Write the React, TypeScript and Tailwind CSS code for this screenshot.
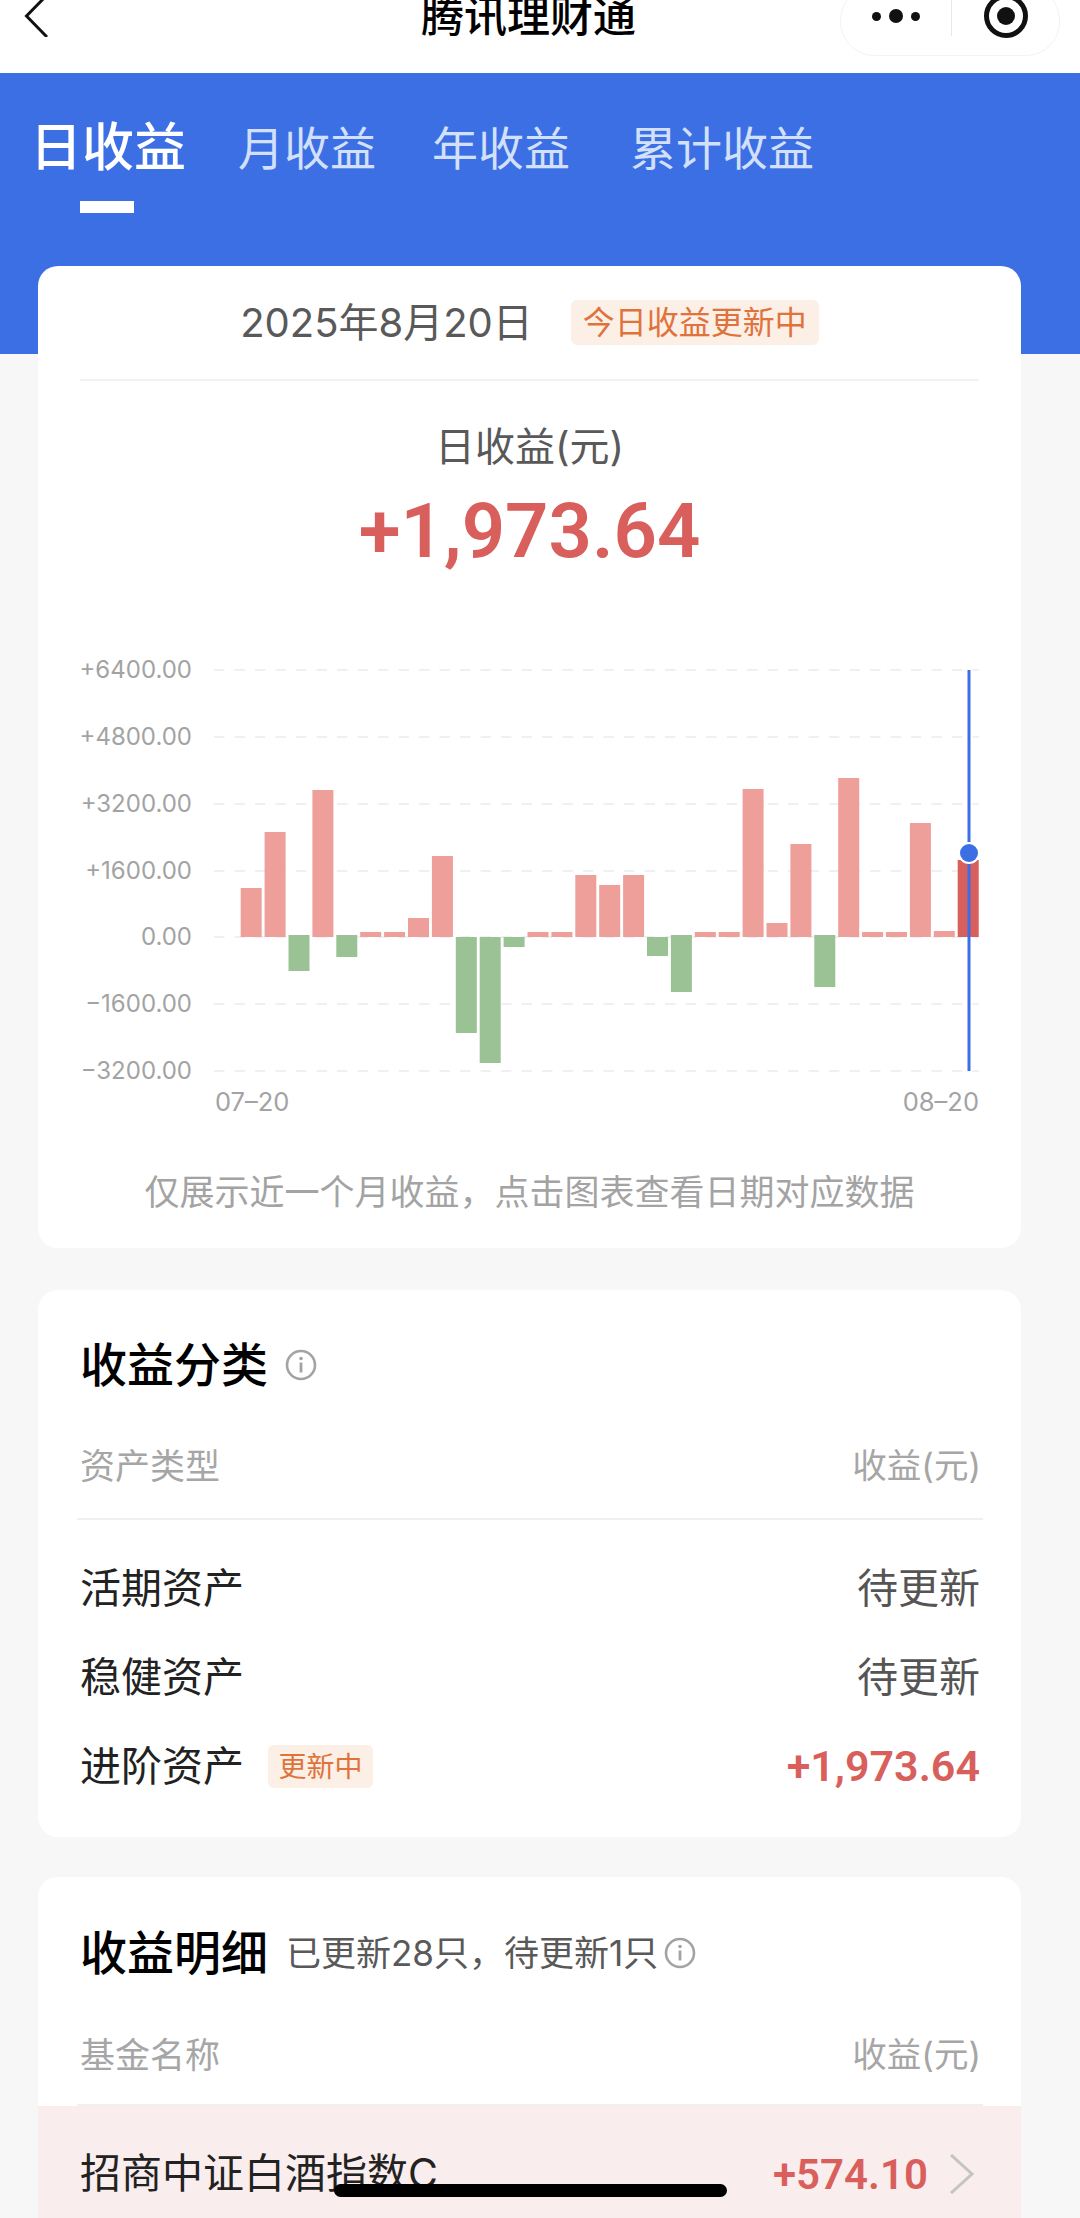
import React from 'react';

const fontStack = { fontFamily: '"Inter", "Noto Sans CJK SC", sans-serif' };
const numberFont = 'font-["Roboto","Noto_Sans_CJK_SC",sans-serif]';

// bar tops/bottoms in page pixels, baseline of the chart is y=937
const bars: { top: number; bottom: number }[] = [
  { top: 888, bottom: 937 },
  { top: 832, bottom: 937 },
  { top: 935, bottom: 971 },
  { top: 790, bottom: 937 },
  { top: 935, bottom: 957 },
  { top: 932, bottom: 937 },
  { top: 932, bottom: 937 },
  { top: 918, bottom: 937 },
  { top: 856, bottom: 937 },
  { top: 937, bottom: 1033 },
  { top: 937, bottom: 1063 },
  { top: 937, bottom: 947 },
  { top: 932, bottom: 937 },
  { top: 932, bottom: 937 },
  { top: 875, bottom: 937 },
  { top: 885, bottom: 937 },
  { top: 875, bottom: 937 },
  { top: 937, bottom: 956 },
  { top: 935, bottom: 992 },
  { top: 932, bottom: 937 },
  { top: 932, bottom: 937 },
  { top: 789, bottom: 937 },
  { top: 923, bottom: 937 },
  { top: 844, bottom: 937 },
  { top: 935, bottom: 987 },
  { top: 778, bottom: 937 },
  { top: 932, bottom: 937 },
  { top: 932, bottom: 937 },
  { top: 823, bottom: 937 },
  { top: 931, bottom: 937 },
  { top: 860, bottom: 937 },
];

const grid = [
  { y: 670, label: '+6400.00' },
  { y: 737, label: '+4800.00' },
  { y: 804, label: '+3200.00' },
  { y: 871, label: '+1600.00' },
  { y: 937, label: '0.00' },
  { y: 1004, label: '−1600.00' },
  { y: 1071, label: '−3200.00' },
];

const Chart: React.FC = () => (
  <svg viewBox="38 650 983 470" className="mt-[74px] block h-[470px] w-[983px]">
    {grid.map((g) => (
      <g key={g.y}>
        <line x1="214" x2="979" y1={g.y} y2={g.y} stroke="#ebebeb" strokeWidth="1.5" strokeDasharray="10.5 10" />
        <text x="192" y={g.y + 8} textAnchor="end" fontSize="24" fill="#a3a3a3" style={fontStack}>
          {g.label}
        </text>
      </g>
    ))}
    {bars.map((b, i) => {
      const x = 240.7 + i * 23.9;
      const last = i === bars.length - 1;
      const color = last ? '#d95f5c' : b.bottom > 937 ? '#9ac295' : '#ee9f9a';
      return <rect key={i} x={x} y={b.top} width="21" height={b.bottom - b.top} fill={color} />;
    })}
    <line x1="969" x2="969" y1="670" y2="1071" stroke="#3c6fe3" strokeWidth="3" />
    <circle cx="969" cy="853" r="11" fill="#ffffff" />
    <circle cx="969" cy="853" r="9" fill="#3c6fe3" />
    <text x="215" y="1111" fontSize="25.5" fill="#a3a3a3" style={fontStack}>07–20</text>
    <text x="979" y="1111" textAnchor="end" fontSize="25.5" fill="#a3a3a3" style={fontStack}>08–20</text>
  </svg>
);

const InfoIcon: React.FC = () => (
  <svg width="32" height="32" viewBox="0 0 32 32" fill="none">
    <circle cx="16" cy="16" r="14" stroke="#a3a3a3" strokeWidth="2.6" />
    <circle cx="16" cy="9.5" r="1.8" fill="#a3a3a3" />
    <rect x="14.6" y="13.5" width="2.8" height="10" fill="#a3a3a3" />
  </svg>
);

const TableHead: React.FC<{ left: string }> = ({ left }) => (
  <div className="flex justify-between pl-[42px] pr-[40px] text-[35px] leading-[50px] text-[#a6a6a6]">
    <span>{left}</span>
    <span className="text-[34.5px]">收益(元)</span>
  </div>
);

const Row: React.FC<{ name: string; children: React.ReactNode; tag?: boolean }> = ({ name, children, tag }) => (
  <div className="flex h-[89px] items-center justify-between pl-[42px] pr-[41px]">
    <div className="flex items-center">
      <span className="text-[41px] text-[#222222]">{name}</span>
      {tag && (
        <span className="ml-[24px] flex h-[43px] w-[105px] items-center justify-center rounded-[6px] bg-[#fbefe6] text-[28px] text-[#e0733c]">
          更新中
        </span>
      )}
    </div>
    {children}
  </div>
);

export default function App() {
  return (
    <div className="relative h-[2218px] w-[1080px] overflow-hidden bg-[#f7f7f7]" style={fontStack}>
      {/* nav bar, cut off by the top of the screen */}
      <div className="h-[73px] overflow-hidden bg-white">
        <div className="-mt-[14px] flex items-start">
          <svg width="24" height="42" viewBox="0 0 24 42" fill="none" className="ml-[24px] mt-[9px]">
            <path d="M23 0 L2.5 21 L23 42" stroke="#111111" strokeWidth="3" />
          </svg>
          <div className="ml-[373px] text-[43px] font-medium leading-[60px] text-black">腾讯理财通</div>
          <div className="ml-[204px] flex h-[70px] w-[220px] items-center rounded-[34px] border border-[#f3f3f3] pb-[10px]">
            <div className="ml-[31px] flex w-[48px] items-center justify-between">
              <span className="h-[9px] w-[9px] rounded-full bg-[#111111]" />
              <span className="h-[14px] w-[14px] rounded-full bg-[#111111]" />
              <span className="h-[9px] w-[9px] rounded-full bg-[#111111]" />
            </div>
            <span className="ml-[31px] h-[40px] w-px bg-[#e8e8e8]" />
            <div className="ml-[32px] flex h-[44px] w-[44px] items-center justify-center rounded-full border-[5px] border-[#111111]">
              <span className="h-[18px] w-[18px] rounded-full bg-[#111111]" />
            </div>
          </div>
        </div>
      </div>

      {/* tabs */}
      <div className="h-[281px] bg-[#3c6fe3] pl-[30px] pt-[40px]">
        <div className="flex items-center text-[46px] leading-[70px] text-[#d3e0fa]">
          <div className="w-[208px] text-[52px] font-medium text-white">日收益</div>
          <div className="w-[194px]">月收益</div>
          <div className="w-[198px]">年收益</div>
          <div>累计收益</div>
        </div>
        <div className="ml-[50px] mt-[18px] h-[12px] w-[54px] bg-white" />
      </div>

      <div className="-mt-[88px] pl-[38px] pr-[59px]">
        {/* daily earnings */}
        <section className="rounded-[20px] bg-white">
          <div className="flex h-[113px] items-center justify-center gap-[38px]">
            <span className="text-[40px] text-[#595959]">2025年8月20日</span>
            <span className="flex h-[45px] w-[248px] items-center justify-center rounded-[6px] bg-[#fbefe6] text-[32px] text-[#e0733c]">
              今日收益更新中
            </span>
          </div>
          <div className="mx-[42px] h-[2px] bg-[#f2f2f2]" />
          <div className="mt-[41px] text-center text-[40px] leading-[50px] text-[#595959]">日收益(元)</div>
          <div className={`mt-[14px] text-center text-[76px] font-semibold leading-[90px] text-[#d95f5c] ${numberFont}`}>
            +1,973.64
          </div>
          <Chart />
          <div className="mt-[47px] pb-[31px] text-center text-[35px] leading-[50px] text-[#a3a3a3]">
            仅展示近一个月收益，点击图表查看日期对应数据
          </div>
        </section>

        {/* by asset class */}
        <section className="mt-[42px] rounded-[20px] bg-white pb-[26px] pt-[45px]">
          <div className="flex h-[60px] items-center pl-[42px]">
            <span className="text-[47px] font-medium text-black">收益分类</span>
            <span className="ml-[17px]"><InfoIcon /></span>
          </div>
          <div className="mt-[46px]"><TableHead left="资产类型" /></div>
          <div className="ml-[39px] mr-[38px] mt-[27px] h-[2px] bg-[#f0f0f0]" />
          <div className="mt-[24px]">
            <Row name="活期资产"><span className="text-[41px] text-[#555555]">待更新</span></Row>
            <Row name="稳健资产"><span className="text-[41px] text-[#555555]">待更新</span></Row>
            <Row name="进阶资产" tag>
              <span className={`text-[43px] font-semibold text-[#d95f5c] ${numberFont}`}>+1,973.64</span>
            </Row>
          </div>
        </section>

        {/* by fund */}
        <section className="mt-[40px] rounded-t-[20px] bg-white pt-[46px]">
          <div className="flex h-[60px] items-center pl-[42px]">
            <span className="text-[47px] font-medium text-black">收益明细</span>
            <span className="ml-[18px] text-[35px] text-[#595959]">已更新28只，待更新1只</span>
            <span className="ml-[6px]"><InfoIcon /></span>
          </div>
          <div className="mt-[47px]"><TableHead left="基金名称" /></div>
          <div className="ml-[39px] mr-[38px] mt-[24px] h-[2px] bg-[#f0f0f0]" />
          <div className="flex h-[136px] items-center justify-between bg-[#f9eded] pl-[42px] pr-[46px]">
            <span className="text-[41px] text-[#222222]">招商中证白酒指数C</span>
            <div className="flex items-center">
              <span className={`text-[42px] font-semibold text-[#d95f5c] ${numberFont}`}>+574.10</span>
              <svg width="27" height="40" viewBox="0 0 27 40" fill="none" className="ml-[20px]">
                <path d="M3 1 L24 20 L3 39" stroke="#c4c4c4" strokeWidth="3" />
              </svg>
            </div>
          </div>
        </section>
      </div>

      {/* iOS home indicator */}
      <div className="absolute left-[334px] top-[2184px] h-[13px] w-[393px] rounded-full bg-black" />
    </div>
  );
}
